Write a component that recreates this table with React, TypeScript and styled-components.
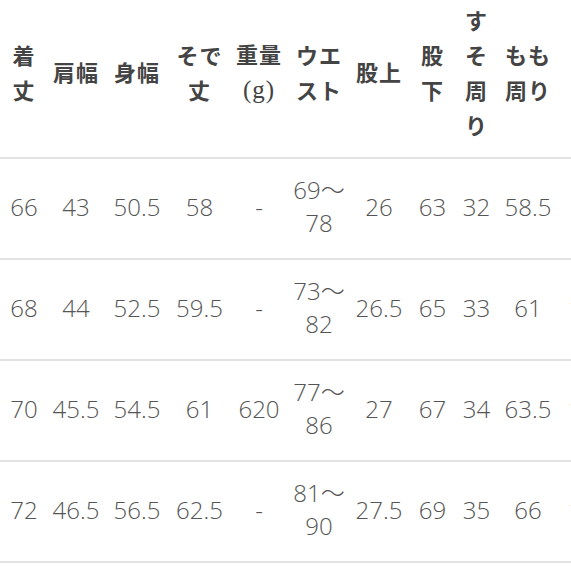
import styled, { createGlobalStyle } from "styled-components";

const GlobalStyle = createGlobalStyle`
    html, body {
        margin: 0;
        padding: 0;
        background: #ffffff;
        overflow: hidden;
    }
`

const columns = [48, 56, 66, 59, 60, 60, 60, 47, 41, 62, 66];

const headers = [
    ["着", "丈"],
    ["肩幅"],
    ["身幅"],
    ["そで", "丈"],
    ["重量", "(g)"],
    ["ウエ", "スト"],
    ["股上"],
    ["股", "下"],
    ["す", "そ", "周", "り"],
    ["もも", "周り"],
    ["ヒッ", "プ"],
];

const rows = [
    ["66", "43", "50.5", "58", "-", "69～|78", "26", "63", "32", "58.5", "-"],
    ["68", "44", "52.5", "59.5", "-", "73～|82", "26.5", "65", "33", "61", "17.5"],
    ["70", "45.5", "54.5", "61", "620", "77～|86", "27", "67", "34", "63.5", "18.5"],
    ["72", "46.5", "56.5", "62.5", "-", "81～|90", "27.5", "69", "35", "66", "19.5"],
];

const Table = styled.div`
    width: 640px;
    display: flex;
    flex-direction: column;
`

const Row = styled.div<{ $header?: boolean }>`
    display: grid;
    grid-template-columns: ${columns.map(c => c + "px").join(" ")};
    height: ${props => props.$header ? 157 : 99}px;
    border-bottom: 2px solid #e2e2e2;
    box-sizing: content-box;
`

const HeadCell = styled.div`
    display: flex;
    flex-direction: column;
    align-items: center;
    justify-content: center;
    padding-bottom: 14px;
    font-family: "Noto Sans CJK JP", "Noto Sans", sans-serif;
    font-weight: 700;
    font-size: 22px;
    letter-spacing: 1px;
    line-height: 35px;
    color: #444444;
    white-space: nowrap;
`

const Unit = styled.span`
    font-family: "Liberation Serif", serif;
    font-weight: 400;
    font-size: 25px;
    color: #444;
`

const Cell = styled.div`
    display: flex;
    flex-direction: column;
    align-items: center;
    justify-content: center;
    padding-bottom: 5px;
    font-family: "Open Sans", "Noto Sans CJK JP", sans-serif;
    font-weight: 300;
    font-size: 24px;
    line-height: 33px;
    color: #555555;
    white-space: nowrap;
`

export default function App() {
    return <>
        <GlobalStyle />
        <Table>
            <Row $header>
                {headers.map((lines, i) =>
                    <HeadCell key={i}>
                        {lines.map((line, j) =>
                            <span key={j}>{line === "(g)" ? <Unit>(g)</Unit> : line}</span>
                        )}
                    </HeadCell>
                )}
            </Row>
            {rows.map((row, r) =>
                <Row key={r}>
                    {row.map((value, i) =>
                        <Cell key={i}>
                            {value.split("|").map((part, j) => <span key={j}>{part}</span>)}
                        </Cell>
                    )}
                </Row>
            )}
        </Table>
    </>;
}
